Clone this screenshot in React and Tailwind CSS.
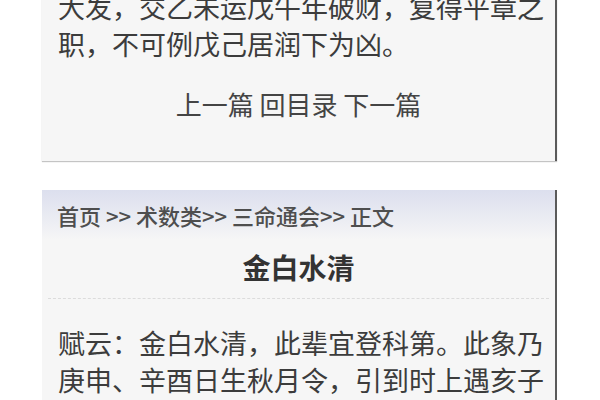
export default function App() {
  const font = { fontFamily: '"Noto Sans CJK SC", "Noto Sans", sans-serif' };

  return (
    <div className="w-[600px] h-[400px] overflow-hidden bg-white" style={font}>
      {/* previous article, tail end */}
      <div className="ml-[42px] w-[515px] bg-[#f6f6f6] border-r-2 border-[#5a5a5a] shadow-[0_1px_1px_#c4c4c4] pb-[37px]">
        <div className="-mt-[12px] pl-[16px] text-[27px] leading-[37px] text-[#3c3c3c] whitespace-nowrap">
          <div>大发，交乙未运戊午年破财，复得平章之</div>
          <div>职，不可例戊己居润下为凶。</div>
        </div>
        <div className="mt-[22px] text-center text-[26px] leading-[40px] text-[#444]">
          上一篇 回目录 下一篇
        </div>
      </div>

      {/* current article */}
      <div className="mt-[29px] ml-[42px] w-[515px] h-[300px] bg-[#f6f6f6] border-r-2 border-[#5a5a5a]">
        <div className="h-[50px] bg-gradient-to-b from-[#dcdfee] to-[#f6f6f6] pl-[15px] pt-[10px] text-[22px] leading-[30px] font-medium text-[#4e4e4e] whitespace-nowrap">
          首页 &gt;&gt; 术数类&gt;&gt; 三命通会&gt;&gt; 正文
        </div>
        <div className="mx-[6px] border-b border-dashed border-[#dcdcdc] pt-[8px] pb-[12px] text-center text-[28px] leading-[38px] font-bold text-[#333]">
          金白水清
        </div>
        <div className="pt-[25px] pl-[16px] text-[27px] leading-[37px] text-[#3c3c3c] whitespace-nowrap">
          <div>赋云：金白水清，此辈宜登科第。此象乃</div>
          <div>庚申、辛酉日生秋月令，引到时上遇亥子</div>
          <div>水方，以金白水清，以金白水清，主贵显</div>
        </div>
      </div>
    </div>
  );
}
